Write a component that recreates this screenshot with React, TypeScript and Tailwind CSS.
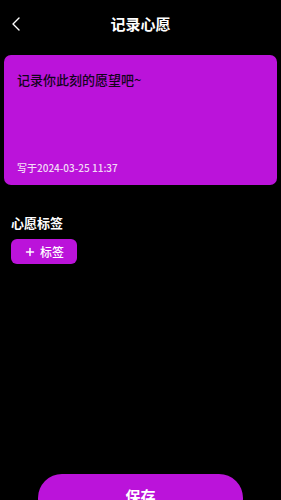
import { ChevronLeft, Plus } from "lucide-react";

export default function App() {
  const font = { fontFamily: '"Noto Sans CJK SC", "Liberation Sans", sans-serif' };
  return (
    <div className="h-[500px] w-full overflow-hidden bg-black flex flex-col" style={font}>
      {/* Header */}
      <div className="relative h-[46px] shrink-0 flex items-center justify-center">
        <ChevronLeft className="absolute left-[4px] top-[12px] h-[24px] w-[24px] text-white" strokeWidth={1.4} />
        <h1 className="text-[15px] font-bold text-white leading-none">记录心愿</h1>
      </div>

      {/* Wish card */}
      <div className="mx-[4px] mt-[9px] h-[130px] shrink-0 rounded-[7px] bg-[#bb13da] px-[13px] pt-[15px] pb-[10px] flex flex-col justify-between">
        <p className="text-[13px] font-medium leading-[20px] text-[#12031a]">记录你此刻的愿望吧~</p>
        <p className="text-[10px] font-medium leading-[14px] text-[#f2dcf6]">写于2024-03-25 11:37</p>
      </div>

      {/* Tags */}
      <div className="mt-[29px] px-[11px] shrink-0">
        <h2 className="text-[13px] font-bold leading-[18px] text-white">心愿标签</h2>
        <button className="mt-[7px] h-[25px] w-[66px] rounded-[6px] bg-[#bb13da] flex items-center justify-center gap-[4px] text-white">
          <Plus className="h-[12px] w-[12px]" strokeWidth={3} />
          <span className="text-[12px] font-medium leading-none">标签</span>
        </button>
      </div>

      {/* Save */}
      <button className="mt-[210px] mx-auto h-[48px] w-[205px] shrink-0 rounded-full bg-[#bb13da] flex justify-center pt-[12px] text-white">
        <span className="text-[15px] font-bold leading-[20px]">保存</span>
      </button>
    </div>
  );
}
